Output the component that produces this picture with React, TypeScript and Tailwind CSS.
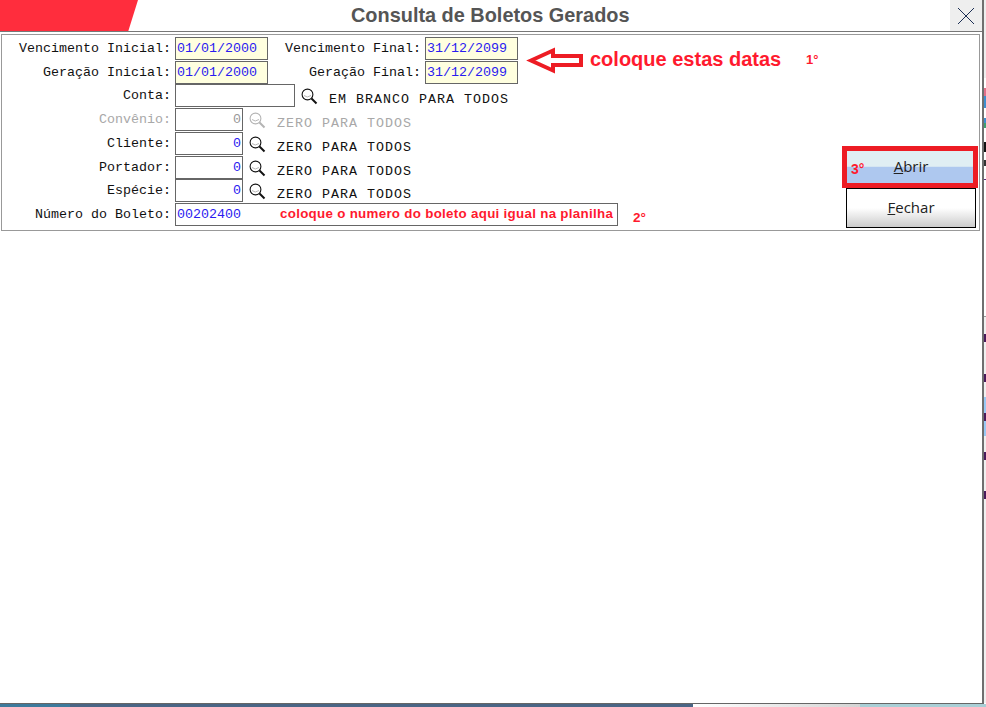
const mono = "font-['Liberation_Mono',monospace]"
const sans = "font-['Liberation_Sans',Arial,sans-serif]"

function SearchIcon({ disabled = false }: { disabled?: boolean }) {
  const color = disabled ? "#b4b4b4" : "#111111"
  return (
    <svg width="17" height="17" viewBox="0 0 17 17" fill="none" className="shrink-0">
      <circle cx="6.5" cy="6.5" r="5.4" stroke={color} strokeWidth="1.1" />
      <path d="M3 7.5 Q6 10.5 10 7.5" stroke="#b8b8b8" strokeWidth="1" />
      <path d="M10.5 10.5 L15.5 15.5" stroke={color} strokeWidth="2" />
    </svg>
  )
}

function Label({ text, width, disabled }: { text: string; width: string; disabled?: boolean }) {
  return (
    <div className={`${width} shrink-0 text-right text-[13.33px] leading-[23px] whitespace-nowrap ${disabled ? "text-[#a8a8a8]" : "text-[#111]"}`}>
      {text}
    </div>
  )
}

function DateBox({ value }: { value: string }) {
  return (
    <div className="ml-[4px] h-[23px] w-[93px] shrink-0 border border-[#666] bg-[#ffffdf] pl-px text-[13.33px] leading-[21px] text-[#2a1cf0]">
      {value}
    </div>
  )
}

function CodeRow({ label, hint, disabled, top }: { label: string; hint: string; disabled?: boolean; top: string }) {
  return (
    <div className={`flex h-[23px] items-start ${top}`}>
      <Label text={label} width="w-[169px]" disabled={disabled} />
      <div className={`ml-[4px] h-[23px] w-[68px] shrink-0 border border-[#666] pr-px text-right text-[13.33px] leading-[21px] ${disabled ? "text-[#999]" : "text-[#2a1cf0]"}`}>
        0
      </div>
      <div className="ml-[6px] mt-[4px]">
        <SearchIcon disabled={disabled} />
      </div>
      <div className={`ml-[11px] mt-[4px] text-[13.33px] leading-[23px] tracking-[1px] whitespace-nowrap ${disabled ? "text-[#a8a8a8]" : "text-[#111]"}`}>
        {hint}
      </div>
    </div>
  )
}

// restos da tela de tras, visiveis na faixa direita
const sideRows = [
  { height: "h-[41px]", active: false },
  { height: "h-[39px]", active: false },
  { height: "h-[39px]", active: true },
  { height: "h-[39px]", active: false },
  { height: "h-[39px]", active: false },
]

export default function App() {
  return (
    <div className={`relative flex h-[707px] w-[986px] flex-col overflow-hidden bg-white ${mono}`}>
      <div className="flex min-h-0 flex-1">
        {/* janela */}
        <div className="w-[982px] shrink-0">
          <div className="flex h-[31px] items-center">
            <div className="h-full w-[138px] bg-[#ff2d3d] [clip-path:polygon(0_0,100%_0,93%_100%,0_100%)]" />
            <h1 className={`ml-[213px] whitespace-nowrap text-[19.9px] font-bold text-[#555] ${sans}`}>
              Consulta de Boletos Gerados
            </h1>
            <button type="button" className="ml-auto flex h-full w-[32px] items-center justify-center bg-[#eeeeee]">
              <svg width="18" height="18" viewBox="0 0 18 18" fill="none">
                <path d="M1 1 L17 17 M17 1 L1 17" stroke="#1c2f55" strokeWidth="1" />
              </svg>
            </button>
          </div>
          <div className="h-px bg-[#777]" />

          <div className="ml-px mt-[2px] flex h-[197px] w-[979px] border border-[#999]">
            <div className="flex-1 pt-[2px]">
              <div className="flex h-[23px]">
                <Label text="Vencimento Inicial:" width="w-[169px]" />
                <DateBox value="01/01/2000" />
                <Label text="Vencimento Final:" width="w-[153px]" />
                <DateBox value="31/12/2099" />
              </div>
              <div className="mt-px flex h-[23px]">
                <Label text="Geração Inicial:" width="w-[169px]" />
                <DateBox value="01/01/2000" />
                <Label text="Geração Final:" width="w-[153px]" />
                <DateBox value="31/12/2099" />
              </div>
              <div className="flex h-[23px] items-start">
                <Label text="Conta:" width="w-[169px]" />
                <div className="ml-[4px] h-[23px] w-[120px] shrink-0 border border-[#666]" />
                <div className="ml-[6px] mt-[4px]">
                  <SearchIcon />
                </div>
                <div className="ml-[11px] mt-[4px] text-[13.33px] leading-[23px] tracking-[1px] whitespace-nowrap text-[#111]">
                  EM BRANCO PARA TODOS
                </div>
              </div>
              <CodeRow label="Convênio:" hint="ZERO PARA TODOS" disabled top="mt-px" />
              <CodeRow label="Cliente:" hint="ZERO PARA TODOS" top="mt-px" />
              <CodeRow label="Portador:" hint="ZERO PARA TODOS" top="mt-px" />
              <CodeRow label="Espécie:" hint="ZERO PARA TODOS" top="mt-0" />
              <div className="mt-px flex h-[23px]">
                <Label text="Número do Boleto:" width="w-[169px]" />
                <div className="ml-[4px] flex h-[23px] w-[443px] shrink-0 border border-[#666] pl-px text-[13.33px] leading-[21px] text-[#2a1cf0]">
                  <span className="w-[103px] shrink-0">00202400</span>
                  <span className={`text-[13.33px] font-bold leading-[19px] tracking-[0.3px] whitespace-nowrap text-[#ff1a2e] ${sans}`}>
                    coloque o numero do boleto aqui igual na planilha
                  </span>
                </div>
                <span className={`ml-[15px] mt-[3px] text-[13.5px] font-bold leading-[23px] text-[#ff1a2e] ${sans}`}>2°</span>
              </div>
            </div>

            <div className="mb-[2px] mr-px flex w-[136px] flex-col justify-end">
              <div className="relative h-[42px] w-[136px] border-[5px] border-[#ed1c24] bg-[linear-gradient(to_bottom,#e0eef3_0%,#e0eef3_48%,#aec8ef_50%,#aec8ef_100%)]">
                <button type="button" className="h-[30px] w-full pl-[2px] font-['Open_Sans',sans-serif] text-[15px] leading-[30px] text-[#222]">
                  <u>A</u>brir
                </button>
                <span className={`absolute left-[4px] top-[10px] text-[14px] font-bold leading-[16px] text-[#ff1a2e] ${sans}`}>3°</span>
              </div>
              <button
                type="button"
                className="ml-[4px] h-[40px] w-[130px] border border-black bg-[linear-gradient(to_bottom,#ffffff_0%,#ffffff_50%,#cccccc_100%)] pb-[2px] font-['Open_Sans',sans-serif] text-[15px] text-[#222]"
              >
                <u>F</u>echar
              </button>
            </div>
          </div>
        </div>

        {/* sobra da tela de tras */}
        <div className="w-[2px] shrink-0 bg-[#6f6f6f]" />
        <div className="w-[2px] shrink-0 overflow-hidden bg-white">
          <div className="h-[78px] bg-[#eeeeee]" />
          <div className="h-[10px]" />
          <div className="h-[8px] bg-[#e0708a]" />
          <div className="h-[12px] bg-[#3f8ecf]" />
          <div className="h-[10px]" />
          <div className="h-[5px] bg-[#3f8ecf]" />
          <div className="h-[5px] bg-[#3fa070]" />
          <div className="h-[14px]" />
          <div className="h-[10px] bg-[#111]" />
          <div className="h-[8px]" />
          <div className="h-[6px] bg-[#333]" />
          <div className="h-[13px]" />
          <div className="h-px bg-[#5a2a7a]" />
          <div className="h-[136px]" />
          <div className="h-px bg-[#999]" />
          <div className="bg-[#f0f0f0]">
            {sideRows.map((row, i) => (
              <div key={i} className={`flex items-center ${row.height} ${row.active ? "bg-[#99c9f5]" : ""}`}>
                <div className="h-[8px] w-full bg-[#4a1a5a]" />
              </div>
            ))}
            <div className="h-[200px]" />
          </div>
        </div>
      </div>

      {/* barra inferior */}
      <div className="h-px w-[984px] shrink-0 bg-[#666]" />
      <div className="flex h-[3px] shrink-0">
        <div className="w-[70px] bg-[#3d7a9c]" />
        <div className="w-[623px] bg-[#4a6585]" />
        <div className="w-[167px] bg-[linear-gradient(to_right,#ffffff,#d4d4d4)]" />
        <div className="flex-1 bg-[#a9cfd6]" />
      </div>

      {/* anotacoes por cima */}
      <svg width="60" height="30" viewBox="0 0 60 30" fill="none" className="absolute left-[526px] top-[46px]">
        <path d="M5 14.5 L27 4.5 V10 H55 V19 H27 V24.5 Z" fill="white" stroke="#ed1c24" strokeWidth="4" />
      </svg>
      <span className={`absolute left-[590px] top-[47px] text-[20px] font-bold leading-[24px] text-[#ff1a2e] ${sans}`}>
        coloque estas datas
      </span>
      <span className={`absolute left-[806px] top-[52px] text-[13px] font-bold leading-[16px] text-[#ff1a2e] ${sans}`}>1°</span>
    </div>
  )
}
